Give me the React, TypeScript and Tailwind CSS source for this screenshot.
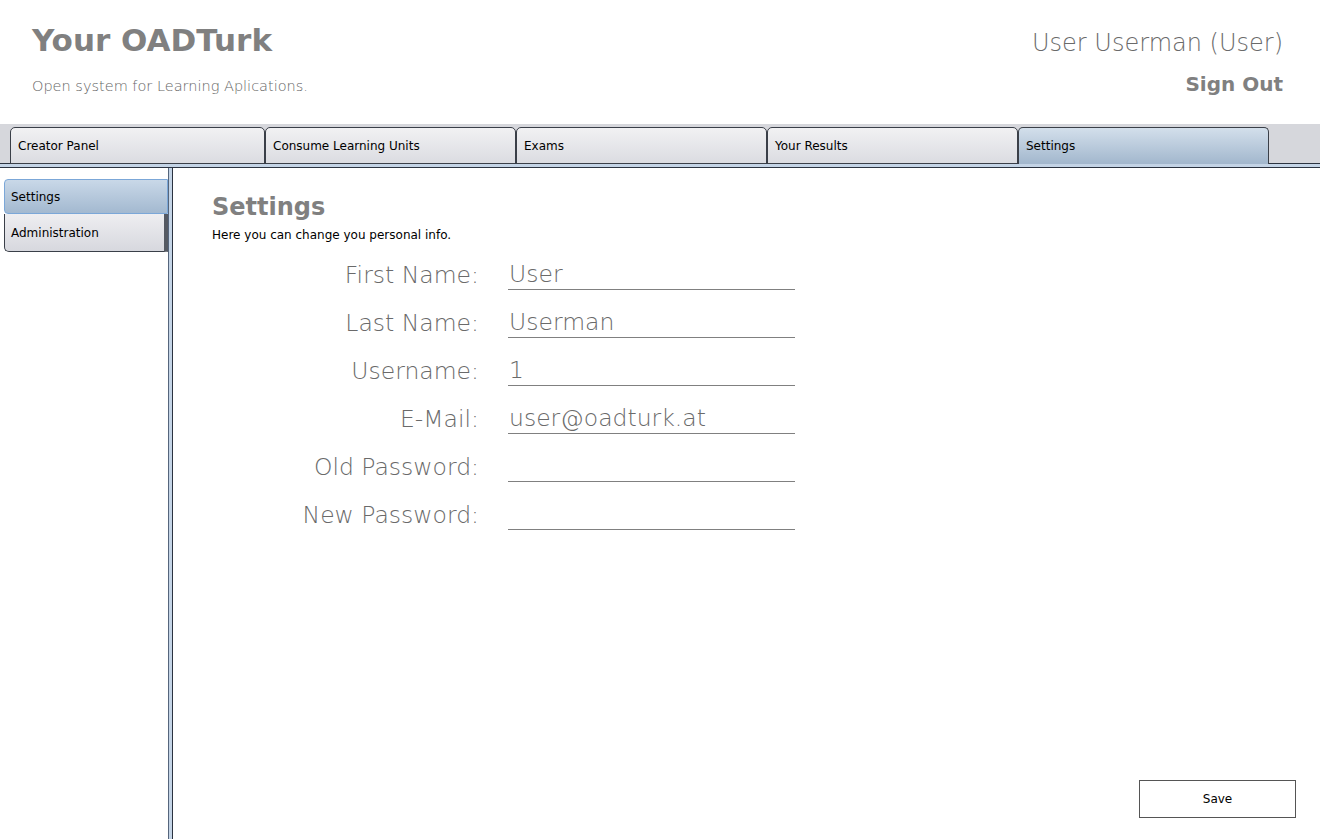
import React from "react";

const tabs = ["Creator Panel", "Consume Learning Units", "Exams", "Your Results", "Settings"];

const fields: { label: string; value: string }[] = [
  { label: "First Name:", value: "User" },
  { label: "Last Name:", value: "Userman" },
  { label: "Username:", value: "1" },
  { label: "E-Mail:", value: "user@oadturk.at" },
  { label: "Old Password:", value: "" },
  { label: "New Password:", value: "" },
];

export default function App() {
  return (
    <div
      className="w-[1320px] h-[839px] overflow-hidden bg-white flex flex-col"
      style={{ fontFamily: '"DejaVu Sans", Verdana, sans-serif' }}
    >
      {/* Header */}
      <header className="h-[124px] flex justify-between pl-[32px] pr-[37px] shrink-0">
        <div className="flex flex-col">
          <h1 className="mt-[22px] text-[31px] leading-[36px] font-bold text-[#808080]">Your OADTurk</h1>
          <p className="mt-[19px] text-[14.5px] leading-[18px] font-extralight text-[#666666]">
            Open system for Learning Aplications.
          </p>
        </div>
        <div className="flex flex-col items-end">
          <div className="mt-[28px] text-[24px] leading-[30px] font-extralight text-[#6a6a6a]">
            User Userman (User)
          </div>
          <div className="mt-[14px] text-[20px] leading-[24px] font-bold text-[#808080]">Sign Out</div>
        </div>
      </header>

      {/* Tab bar */}
      <nav className="h-[40px] bg-[#d6d7dc] flex items-end pl-[10px] shrink-0 relative">
        <div className="absolute left-0 right-0 bottom-0 h-px bg-[#2b3340]" />
        {tabs.map((t, i) => {
          const active = t === "Settings";
          return (
            <div
              key={t}
              className={
                "relative h-[37px] rounded-t-[5px] border border-[#3a3f48] flex items-center pl-[7px] text-[12px] text-black " +
                (i === 0 ? "w-[255px] " : "w-[251px] ") +
                (active
                  ? "bg-gradient-to-b from-[#d3dfeb] to-[#a2b7cd] border-b-0 z-10"
                  : "bg-gradient-to-b from-[#f1f1f3] to-[#dbdce1]")
              }
            >
              {t}
            </div>
          );
        })}
      </nav>
      <div className="h-[3px] bg-[#c4d4e6] shrink-0" />
      <div className="h-px bg-[#2b3340] shrink-0" />

      {/* Body */}
      <div className="flex flex-1 min-h-0">
        {/* Sidebar */}
        <aside className="w-[168px] shrink-0 pt-[11px] pl-[4px] flex flex-col">
          <div className="h-[35px] rounded-l-[4px] border border-[#7ba7d8] bg-gradient-to-b from-[#c9d8e8] to-[#a3b9d0] flex items-center pl-[6px] text-[12px] text-black">
            Settings
          </div>
          <div className="h-[38px] rounded-bl-[5px] border border-[#3a3f48] border-t-0 border-r-[4px] border-r-[#555a63] bg-gradient-to-b from-[#eeeef1] to-[#d7d8de] flex items-center pl-[6px] text-[12px] text-black">
            Administration
          </div>
        </aside>
        <div className="w-px bg-[#55657c] shrink-0" />
        <div className="w-[3px] bg-[#c4d4e6] shrink-0" />
        <div className="w-px bg-[#2b3340] shrink-0" />

        {/* Content */}
        <main className="flex-1 flex flex-col pl-[39px] pr-[24px] pb-[21px]">
          <h2 className="mt-[25px] text-[24px] leading-[28px] font-bold text-[#808080]">Settings</h2>
          <p className="mt-[7px] text-[12px] leading-[14px] text-black">Here you can change you personal info.</p>
          <div className="flex flex-col">
            {fields.map((f) => (
              <div key={f.label} className="flex items-end h-[48px]">
                <div className="w-[267px] text-right text-[23.5px] leading-[30px] font-extralight text-[#6a6a6a]">
                  {f.label}
                </div>
                <div className="ml-[29px] w-[287px] h-[34px] pt-[3px] border-b border-[#808080] text-[23.5px] leading-[30px] font-extralight text-[#6a6a6a] pl-px">
                  {f.value}
                </div>
              </div>
            ))}
          </div>
          <div className="flex-1" />
          <div className="flex justify-end">
            <button className="w-[157px] h-[38px] border border-[#555] bg-white text-[12px] text-black">
              Save
            </button>
          </div>
        </main>
      </div>
    </div>
  );
}
